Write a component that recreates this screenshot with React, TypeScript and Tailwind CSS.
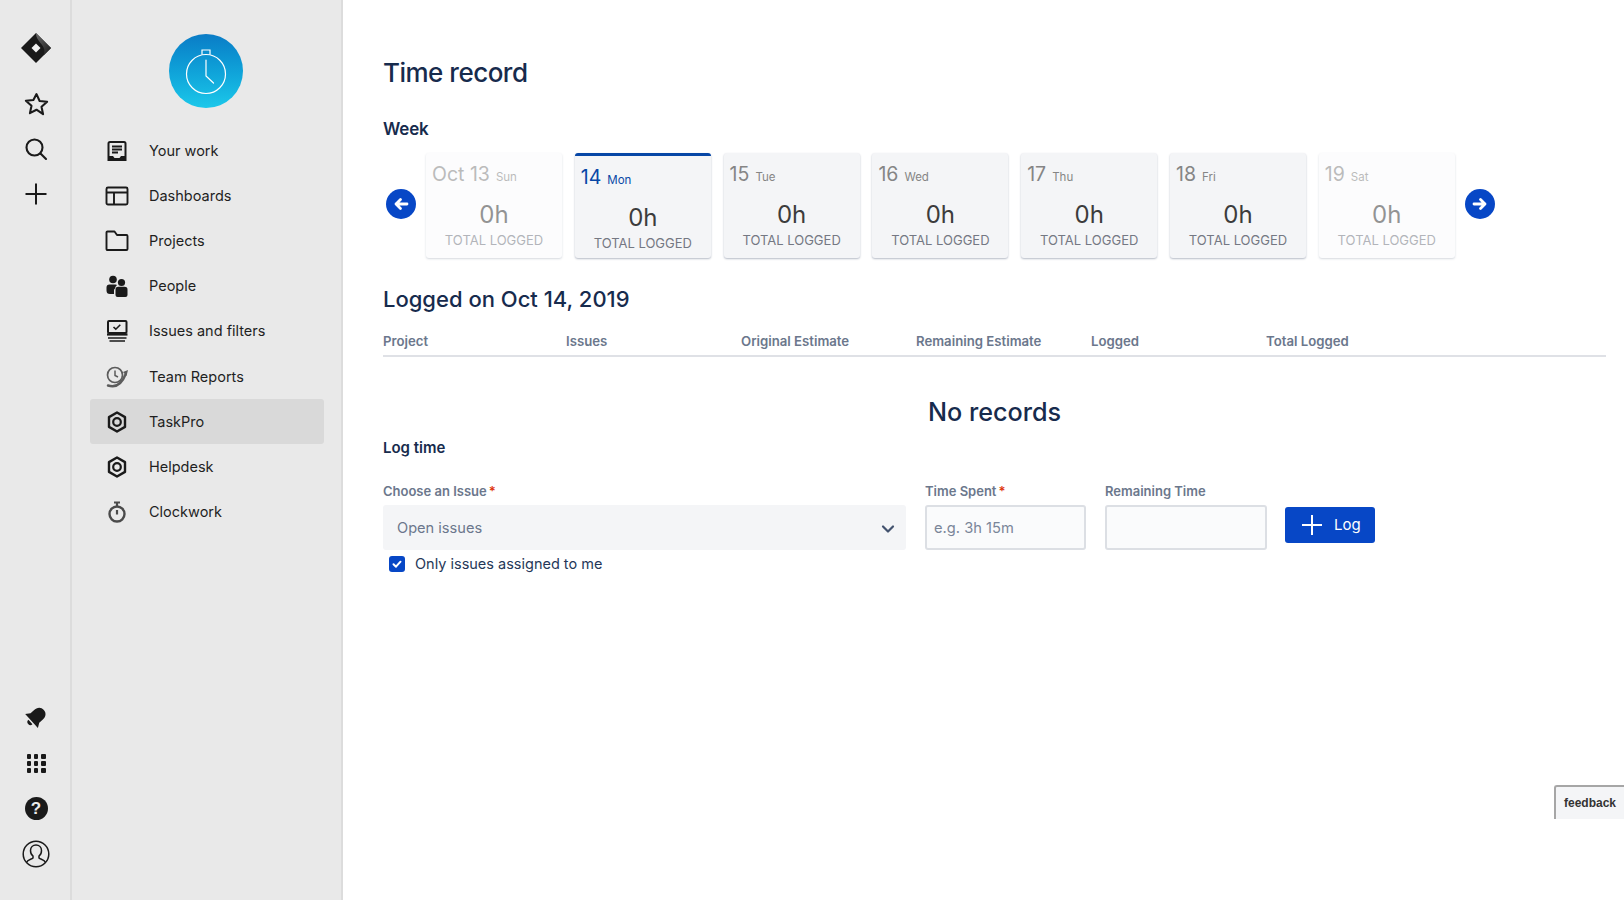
import React from 'react';

const navItems = [
  { label: 'Your work', icon: <WorkIcon /> },
  { label: 'Dashboards', icon: <DashIcon /> },
  { label: 'Projects', icon: <FolderIcon /> },
  { label: 'People', icon: <PeopleIcon /> },
  { label: 'Issues and filters', icon: <IssuesIcon /> },
  { label: 'Team Reports', icon: <ReportsIcon /> },
  { label: 'TaskPro', icon: <HexIcon />, active: true },
  { label: 'Helpdesk', icon: <HexIcon /> },
  { label: 'Clockwork', icon: <StopwatchIcon /> },
];

const days = [
  { date: 'Oct 13', day: 'Sun', faded: true },
  { date: '14', day: 'Mon', selected: true },
  { date: '15', day: 'Tue' },
  { date: '16', day: 'Wed' },
  { date: '17', day: 'Thu' },
  { date: '18', day: 'Fri' },
  { date: '19', day: 'Sat', faded: true },
];

const columns = ['Project', 'Issues', 'Original Estimate', 'Remaining Estimate', 'Logged', 'Total Logged'];

function WorkIcon() {
  return (
    <svg width="24" height="24" viewBox="0 0 24 24" fill="none">
      <path d="M3.500 4.500a1.500 1.500 0 0 1 1.500-1.500h14a1.500 1.500 0 0 1 1.500 1.500v16.500h-17z" stroke="#1a1a1a" strokeWidth="2" />
      <path d="M7 7.500h10M7 10.500h10M7 13.500h6" stroke="#1a1a1a" strokeWidth="1.800" />
      <path d="M3 17h5l1.500 2h5l1.500-2h5v3.500a1.500 1.500 0 0 1-1.500 1.500h-15a1.500 1.500 0 0 1-1.500-1.500z" fill="#1a1a1a" />
    </svg>
  );
}

function DashIcon() {
  return (
    <svg width="24" height="24" viewBox="0 0 24 24" fill="none" stroke="#1a1a1a" strokeWidth="1.900">
      <rect x="1.500" y="3.500" width="21" height="17" rx="1.500" />
      <path d="M1.500 8.500h21M9 8.500v12" />
    </svg>
  );
}

function FolderIcon() {
  return (
    <svg width="24" height="24" viewBox="0 0 24 24" fill="none" stroke="#1a1a1a" strokeWidth="1.900">
      <path d="M1.500 3.500a1 1 0 0 1 1-1h7l2.500 3.500h9.500a1 1 0 0 1 1 1v13a1 1 0 0 1-1 1h-19a1 1 0 0 1-1-1z" strokeLinejoin="round" />
    </svg>
  );
}

function PeopleIcon() {
  return (
    <svg width="24" height="24" viewBox="0 0 24 24" fill="#1a1a1a">
      <circle cx="8" cy="5.500" r="3.800" />
      <circle cx="16.500" cy="8.500" r="3.600" />
      <path d="M1.500 13.500a3 3 0 0 1 3-3h6a3 3 0 0 1 1.500.5 6 6 0 0 0-2 3.500c-.8.5-1 1.500-1 2.500v3h-4a3.500 3.500 0 0 1-3.500-3.500z" />
      <path d="M10.500 16a3 3 0 0 1 3-3.200h6a3 3 0 0 1 3 3.200v5a2 2 0 0 1-2 2h-8a2 2 0 0 1-2-2z" />
    </svg>
  );
}

function IssuesIcon() {
  return (
    <svg width="24" height="24" viewBox="0 0 24 24" fill="none" stroke="#1a1a1a">
      <rect x="3" y="2" width="18.500" height="12" rx="1" strokeWidth="2" />
      <path d="M8.500 8l2.300 2.200 4.500-4.500" strokeWidth="1.600" />
      <path d="M2 15.500h20.500" strokeWidth="2.200" />
      <path d="M3 19h18.500M4.500 22h15.500" strokeWidth="1.700" />
    </svg>
  );
}

function ReportsIcon() {
  return (
    <svg width="24" height="24" viewBox="0 0 24 24" fill="none" stroke="#5c5c5c">
      <circle cx="10" cy="10" r="7.500" strokeWidth="1.700" />
      <path d="M10 5.500v5l3 1.500" strokeWidth="1.500" />
      <path d="M3 20.500c8 2.500 14-2 17.500-11" strokeWidth="2.400" strokeLinecap="round" />
      <path d="M23 5l-5 2 3.500 4z" fill="#5c5c5c" stroke="none" />
    </svg>
  );
}

function HexIcon() {
  return (
    <svg width="24" height="24" viewBox="0 0 24 24" fill="none" stroke="#1a1a1a">
      <path d="M12 2.500l8 4.600v9.800l-8 4.600-8-4.600V7.100z" strokeWidth="2.400" strokeLinejoin="round" />
      <circle cx="12" cy="12" r="3.800" strokeWidth="2.200" />
    </svg>
  );
}

function StopwatchIcon() {
  return (
    <svg width="24" height="24" viewBox="0 0 24 24" fill="none" stroke="#4a4a4a">
      <circle cx="12" cy="14" r="7.500" strokeWidth="2.400" />
      <path d="M12 10v4.500" strokeWidth="2.200" />
      <path d="M9 2.500h6M12 2.500v4" strokeWidth="2.200" />
    </svg>
  );
}

function Logo() {
  return (
    <svg width="32" height="32" viewBox="0 0 32 32">
      <defs>
        <linearGradient id="logoShade" x1="0" y1="0" x2="1" y2="1">
          <stop offset="0" stopColor="#6a6a6a" />
          <stop offset="1" stopColor="#1a1a1a" />
        </linearGradient>
      </defs>
      <path d="M16 1l15 15-15 15L1 16z" fill="#1a1a1a" />
      <path d="M16 1l15 15-7.500 7.500C28 13 16 11 16 1z" fill="url(#logoShade)" />
      <path d="M16 11.500l4.500 4.500-4.500 4.500-4.500-4.500z" fill="#f2f2f2" />
    </svg>
  );
}

function RailTop() {
  return (
    <div className="flex flex-col items-center">
      <Logo />
      <svg className="mt-[28px]" width="25" height="25" viewBox="0 0 24 24" fill="none" stroke="#1a1a1a" strokeWidth="2" strokeLinejoin="round">
        <path d="M12 2l3 6.600 7.200.8-5.400 4.800 1.500 7.100L12 17l-6.300 3.300 1.500-7.100-5.400-4.800 7.200-.8z" />
      </svg>
      <svg className="mt-[20px]" width="24" height="24" viewBox="0 0 24 24" fill="none" stroke="#1a1a1a" strokeWidth="2.100" strokeLinecap="round">
        <circle cx="10.500" cy="10.500" r="8" />
        <path d="M16.500 16.500l5.500 5.500" />
      </svg>
      <svg className="mt-[21px]" width="24" height="24" viewBox="0 0 24 24" fill="none" stroke="#1a1a1a" strokeWidth="2">
        <path d="M12 1.500v21M1.500 12h21" />
      </svg>
    </div>
  );
}

function RailBottom() {
  return (
    <div className="flex flex-col items-center">
      <svg width="24" height="24" viewBox="0 0 24 24" fill="#1a1a1a">
        <g transform="rotate(48 12 12)">
          <path d="M12 1.500c-4.500 0-6.500 3.500-6.500 7.500v4.500L2.500 18h19l-3-4.500V9c0-4-2-7.500-6.500-7.500z" />
          <path d="M9 19.500a3 3 0 0 0 6 0z" />
        </g>
      </svg>
      <div className="mt-[25px] grid grid-cols-3 gap-[2.500px] w-[19px]">
        {Array.from({ length: 9 }).map((_, i) => (
          <div key={i} className="w-[4.700px] h-[4.700px] rounded-[1px] bg-[#1a1a1a]" />
        ))}
      </div>
      <div className="mt-[24px] w-[23px] h-[23px] rounded-full bg-[#1a1a1a] text-[#ececec] flex items-center justify-center text-[17px] font-bold leading-none font-['Liberation_Sans',sans-serif]">
        ?
      </div>
      <svg className="mt-[20px]" width="28" height="28" viewBox="0 0 28 28" fill="none" stroke="#1a1a1a" strokeWidth="1.500">
        <circle cx="14" cy="14" r="12.800" />
        <path d="M4.500 22.500c1-3 5-3 6.500-4.500v-2c-1.500-1-2.500-3-2.500-5.500 0-3.500 2.500-5.500 5.500-5.500s5.500 2 5.500 5.500c0 2.500-1 4.500-2.500 5.500v2c1.500 1.500 5.500 1.500 6.500 4.500" />
      </svg>
    </div>
  );
}

function DayCard({ date, day, faded, selected }: { date: string; day: string; faded?: boolean; selected?: boolean }) {
  return (
    <div
      className={`w-[136px] h-[105px] rounded-[3px] shadow-[0_1px_2px_rgba(9,30,66,0.3)] flex flex-col pt-[7px] pl-[6px] ${
        faded ? 'bg-[#fafbfc] opacity-55' : 'bg-[#f4f5f7]'
      } ${selected ? 'border-t-[3px] border-[#0747a6]' : ''}`}
    >
      <div className={`flex items-baseline gap-[6px] text-[19.500px] leading-[28px] ${selected ? 'text-[#0747a6]' : 'text-[#858585]'}`}>
        <span>{date}</span>
        <span className="text-[11.500px]">{day}</span>
      </div>
      <div className="-ml-[6px] mt-[9px] text-center text-[24px] leading-[30px] text-[#3c3c3c]">0h</div>
      <div className="-ml-[6px] text-center text-[13px] leading-[20px] text-[#747883]">TOTAL LOGGED</div>
    </div>
  );
}

function ArrowButton({ right }: { right?: boolean }) {
  return (
    <div className="w-[30px] h-[30px] rounded-full bg-[#0747c6] flex items-center justify-center shrink-0">
      <svg className={right ? 'rotate-180' : ''} width="16" height="16" viewBox="0 0 16 16" fill="none" stroke="#fff" strokeWidth="2.800" strokeLinecap="round" strokeLinejoin="round">
        <path d="M14 8H3M7.500 3.500L3 8l4.500 4.500" />
      </svg>
    </div>
  );
}

function Label({ text, required }: { text: string; required?: boolean }) {
  return (
    <div className="text-[13px] leading-[18px] font-semibold text-[#6b778c] mb-[5px]">
      {text}
      {required && <span className="text-[#de350b] ml-[2px]">*</span>}
    </div>
  );
}

export default function App() {
  return (
    <div className="relative flex w-[1624px] h-[900px] overflow-hidden bg-white font-['Inter',sans-serif]">
      <div className="w-[72px] shrink-0 bg-[#e9e9e9] border-r-2 border-[#dcdcdc] flex flex-col justify-between pt-[32px] pb-[32px] pl-[2px]">
        <RailTop />
        <RailBottom />
      </div>

      <div className="w-[271px] shrink-0 bg-[#e9e9e9] border-r-2 border-[#dcdcdc] flex flex-col pt-[34px] pl-[18px] pr-[17px]">
        <div className="self-center -ml-[2px] w-[74px] h-[74px] rounded-full bg-gradient-to-b from-[#0b7cc6] to-[#1cc8ea] flex items-center justify-center">
          <svg width="44" height="48" viewBox="0 0 44 48" fill="none" stroke="#fff" strokeWidth="1.200">
            <circle cx="22" cy="27" r="19.500" />
            <path d="M18 7.500V3h8v4.500" />
            <path d="M22 13v16l7.500 7" strokeLinecap="round" />
          </svg>
        </div>
        <div className="mt-[20px] flex flex-col">
          {navItems.map((item) => (
            <div
              key={item.label}
              className={`h-[45.200px] flex items-center rounded-[3px] pl-[15px] text-[14.500px] text-[#1f1f1f] ${item.active ? 'bg-[#d9d9d9]' : ''}`}
            >
              <span className="w-[24px] h-[24px] flex items-center justify-center mr-[20px]">{item.icon}</span>
              {item.label}
            </div>
          ))}
        </div>
      </div>

      <div className="flex-1 min-w-0 pl-[40px] pr-[18px] pt-[54px]">
        <h1 className="text-[26px] leading-[38px] tracking-[-0.5px] font-medium text-[#172b4d]">Time record</h1>
        <h2 className="mt-[25px] text-[17px] leading-[24px] tracking-[-0.2px] font-semibold text-[#172b4d]">Week</h2>

        <div className="mt-[12px] ml-[3px] flex items-start gap-[10px]">
          <div className="mt-[36px]">
            <ArrowButton />
          </div>
          <div className="flex gap-[12.800px]">
            {days.map((d) => (
              <DayCard key={d.day} {...d} />
            ))}
          </div>
          <div className="mt-[36px]">
            <ArrowButton right />
          </div>
        </div>

        <h2 className="mt-[25px] text-[22px] leading-[32px] font-medium text-[#172b4d]">Logged on Oct 14, 2019</h2>

        <div className="mt-[16px] grid grid-cols-[183px_175px_175px_175px_175px_1fr] border-b-2 border-[#dfe1e6] pb-[4px] text-[13.200px] leading-[20px] font-semibold text-[#6b778c]">
          {columns.map((c) => (
            <div key={c}>{c}</div>
          ))}
        </div>

        <div className="mt-[35px] text-center text-[25.200px] leading-[40px] font-medium text-[#172b4d]">No records</div>

        <h3 className="mt-[4px] text-[15px] leading-[24px] font-semibold text-[#172b4d]">Log time</h3>

        <div className="mt-[22px] flex items-start">
          <div className="w-[523px] mr-[19px]">
            <Label text="Choose an Issue" required />
            <div className="h-[45px] rounded-[3px] bg-[#f4f5f7] flex items-center justify-between pt-[3px] pl-[14px] pr-[8px] text-[14.600px] text-[#6b778c]">
              Open issues
              <svg width="20" height="20" viewBox="0 0 20 20" fill="none" stroke="#42526e" strokeWidth="2.200" strokeLinecap="round" strokeLinejoin="round">
                <path d="M5 7.500l5 5 5-5" />
              </svg>
            </div>
            <label className="mt-[2px] pl-[6px] flex items-center text-[14.500px] leading-[24px] text-[#253858]">
              <span className="w-[16px] h-[16px] rounded-[3px] bg-[#0747c6] flex items-center justify-center mr-[10px]">
                <svg width="12" height="12" viewBox="0 0 12 12" fill="none" stroke="#fff" strokeWidth="2" strokeLinecap="round" strokeLinejoin="round">
                  <path d="M2.500 6.300l2.500 2.400 4.500-5" />
                </svg>
              </span>
              Only issues assigned to me
            </label>
          </div>
          <div className="w-[161px] mr-[19px]">
            <Label text="Time Spent" required />
            <div className="h-[45px] rounded-[3px] border-2 border-[#dcdfe4] bg-[#fafbfc] flex items-center pt-[1px] pl-[7px] text-[14.700px] text-[#7a8699]">e.g. 3h 15m</div>
          </div>
          <div className="w-[162px] mr-[18px]">
            <Label text="Remaining Time" />
            <div className="h-[45px] rounded-[3px] border-2 border-[#dcdfe4] bg-[#fafbfc]" />
          </div>
          <button className="mt-[25px] w-[90px] h-[36px] rounded-[3px] bg-[#0747c6] text-white text-[15px] flex items-center pl-[16px]">
            <svg width="22" height="22" viewBox="0 0 22 22" fill="none" stroke="#fff" strokeWidth="2" className="mr-[11px]">
              <path d="M11 1v20M1 11h20" />
            </svg>
            Log
          </button>
        </div>
      </div>

      <div className="absolute right-0 top-[785px] w-[70px] h-[34px] bg-[#f4f5f7] border-l-2 border-t-2 border-[#a6a6a6] rounded-tl-[3px] flex items-center justify-center text-[12px] font-bold text-[#333] font-['Liberation_Sans',sans-serif]">
        feedback
      </div>
    </div>
  );
}
